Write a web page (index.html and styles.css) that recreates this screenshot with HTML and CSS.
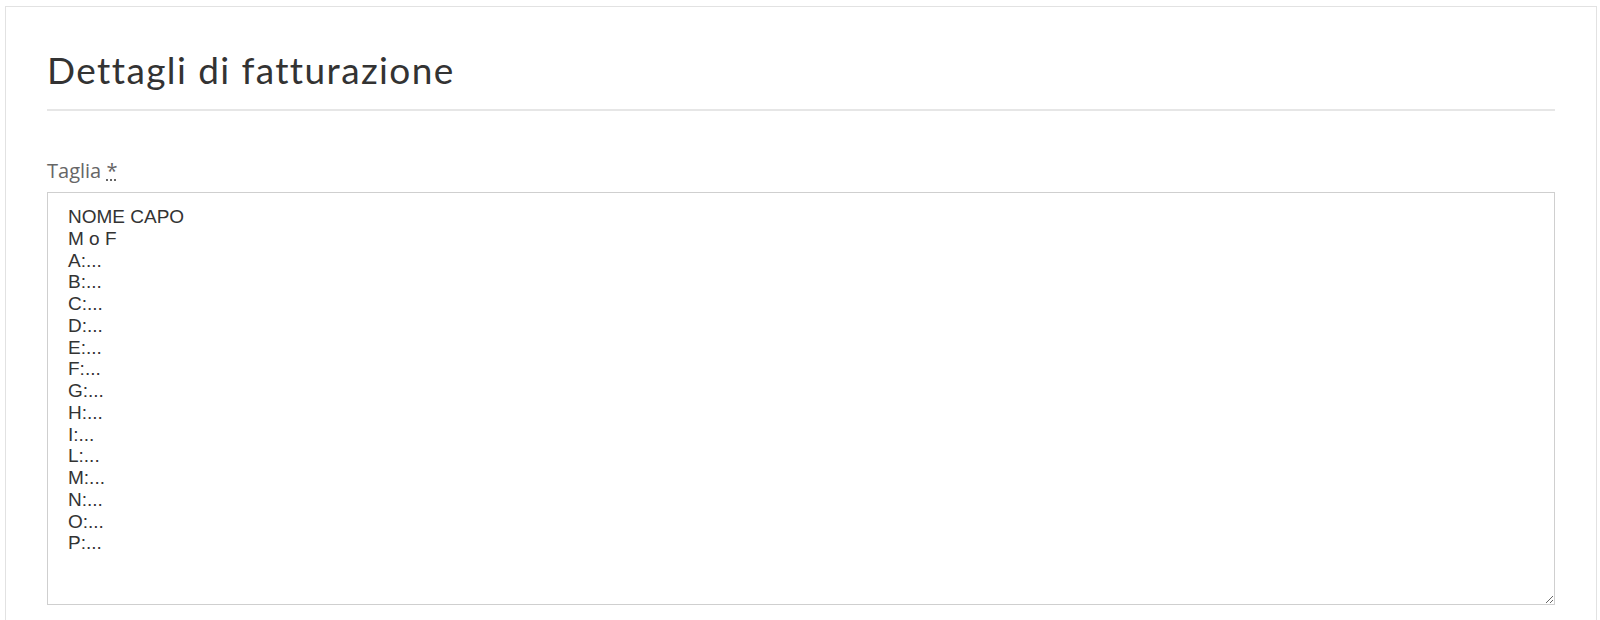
FILE: index.html
```html
<!DOCTYPE html>
<html>
<head>
    <title>Dettagli di fatturazione</title>
    <link rel="stylesheet" href="styles.css">
</head>
<body>
    <div class="billing">
        <h3 class="billing-title">Dettagli di fatturazione</h3>
        <div class="field">
            <label for="taglia">Taglia <abbr class="required" title="obbligatorio">*</abbr></label>
            <textarea id="taglia" name="taglia">NOME CAPO
M o F
A:...
B:...
C:...
D:...
E:...
F:...
G:...
H:...
I:...
L:...
M:...
N:...
O:...
P:...</textarea>
        </div>
    </div>
</body>
</html>
```

FILE: styles.css
```css
body {
    margin: 0;
    padding: 0;
    background: #fff;
    font-family: Lato, sans-serif;
}

.billing {
    margin: 6px 3px 0 5px;
    padding: 0 41px 20px;
    border: 1px solid #e2e2e2;
}

.billing-title {
    margin: 0;
    padding: 40px 0 17px;
    font-family: Lato, sans-serif;
    font-size: 37px;
    font-weight: 400;
    letter-spacing: 1.4px;
    color: #333;
    border-bottom: 2px solid #e6e6e6;
}

.field {
    margin-top: 46px;
}

.field label {
    display: block;
    margin-bottom: 8px;
    font-family: "Open Sans", sans-serif;
    font-size: 20px;
    color: #666;
}

.required {
    text-decoration: underline dotted;
    color: #666;
}

.field textarea {
    display: block;
    box-sizing: border-box;
    width: 100%;
    height: 413px;
    margin: 0;
    padding: 13px 20px;
    border: 1px solid #cfcfcf;
    font-family: "Liberation Sans", Arial, sans-serif;
    font-size: 19px;
    line-height: 21.75px;
    color: #333;
    resize: vertical;
}
```
